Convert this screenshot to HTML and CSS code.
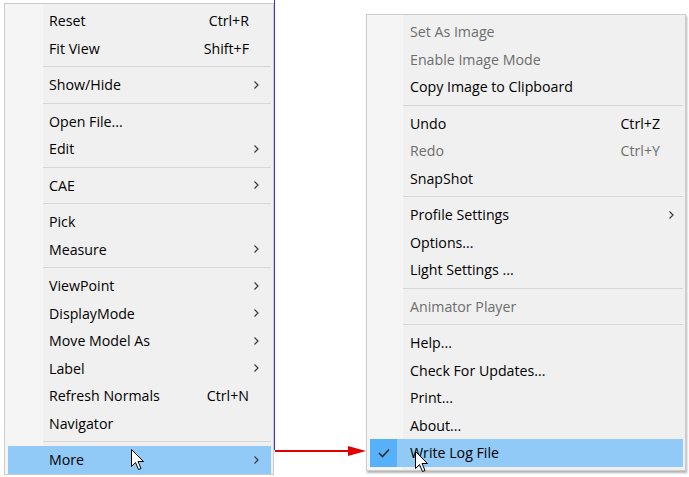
FILE: index.html
```html
<!DOCTYPE html>
<html>
<head>
<meta charset="utf-8">
<link rel="stylesheet" href="styles.css">
</head>
<body>
<div class="scene">
  <div class="menu menu-left">
    <div class="item"><span class="label">Reset</span><span class="key">Ctrl+R</span><span class="sub"></span></div>
    <div class="item"><span class="label">Fit View</span><span class="key">Shift+F</span><span class="sub"></span></div>
    <div class="sep"></div>
    <div class="item"><span class="label">Show/Hide</span><span class="sub"><svg width="5" height="8" viewBox="0 0 5 8"><polyline points="0.5,0.5 4,4 0.5,7.5" /></svg></span></div>
    <div class="sep"></div>
    <div class="item"><span class="label">Open File...</span><span class="sub"></span></div>
    <div class="item"><span class="label">Edit</span><span class="sub"><svg width="5" height="8" viewBox="0 0 5 8"><polyline points="0.5,0.5 4,4 0.5,7.5" /></svg></span></div>
    <div class="sep"></div>
    <div class="item"><span class="label">CAE</span><span class="sub"><svg width="5" height="8" viewBox="0 0 5 8"><polyline points="0.5,0.5 4,4 0.5,7.5" /></svg></span></div>
    <div class="sep"></div>
    <div class="item"><span class="label">Pick</span><span class="sub"></span></div>
    <div class="item"><span class="label">Measure</span><span class="sub"><svg width="5" height="8" viewBox="0 0 5 8"><polyline points="0.5,0.5 4,4 0.5,7.5" /></svg></span></div>
    <div class="sep"></div>
    <div class="item"><span class="label">ViewPoint</span><span class="sub"><svg width="5" height="8" viewBox="0 0 5 8"><polyline points="0.5,0.5 4,4 0.5,7.5" /></svg></span></div>
    <div class="item"><span class="label">DisplayMode</span><span class="sub"><svg width="5" height="8" viewBox="0 0 5 8"><polyline points="0.5,0.5 4,4 0.5,7.5" /></svg></span></div>
    <div class="item"><span class="label">Move Model As</span><span class="sub"><svg width="5" height="8" viewBox="0 0 5 8"><polyline points="0.5,0.5 4,4 0.5,7.5" /></svg></span></div>
    <div class="item"><span class="label">Label</span><span class="sub"><svg width="5" height="8" viewBox="0 0 5 8"><polyline points="0.5,0.5 4,4 0.5,7.5" /></svg></span></div>
    <div class="item"><span class="label">Refresh Normals</span><span class="key">Ctrl+N</span><span class="sub"></span></div>
    <div class="item"><span class="label">Navigator</span><span class="sub"></span></div>
    <div class="sep"></div>
    <div class="item hot"><span class="label">More</span><span class="sub"><svg width="5" height="8" viewBox="0 0 5 8"><polyline points="0.5,0.5 4,4 0.5,7.5" /></svg></span>
      <svg class="cursor cursor-left" width="14" height="22" viewBox="0 0 14 22"><path d="M0.5,0.5 L0.5,17.5 L4.5,13.5 L7.5,20.5 L10,19.5 L7,12.5 L12.5,12.5 Z"/></svg>
    </div>
  </div>

  <div class="connector">
    <svg class="arrow" width="92" height="12" viewBox="0 0 92 12"><line x1="0" y1="6" x2="76" y2="6"/><polygon points="73,1 91,6 73,11"/></svg>
  </div>

  <div class="menu menu-right">
    <div class="item off"><span class="label">Set As Image</span><span class="sub"></span></div>
    <div class="item off"><span class="label">Enable Image Mode</span><span class="sub"></span></div>
    <div class="item"><span class="label">Copy Image to Clipboard</span><span class="sub"></span></div>
    <div class="sep"></div>
    <div class="item"><span class="label">Undo</span><span class="key">Ctrl+Z</span><span class="sub"></span></div>
    <div class="item off"><span class="label">Redo</span><span class="key">Ctrl+Y</span><span class="sub"></span></div>
    <div class="item"><span class="label">SnapShot</span><span class="sub"></span></div>
    <div class="sep"></div>
    <div class="item"><span class="label">Profile Settings</span><span class="sub"><svg width="5" height="8" viewBox="0 0 5 8"><polyline points="0.5,0.5 4,4 0.5,7.5" /></svg></span></div>
    <div class="item"><span class="label">Options...</span><span class="sub"></span></div>
    <div class="item"><span class="label">Light Settings ...</span><span class="sub"></span></div>
    <div class="sep"></div>
    <div class="item off"><span class="label">Animator Player</span><span class="sub"></span></div>
    <div class="sep"></div>
    <div class="item"><span class="label">Help...</span><span class="sub"></span></div>
    <div class="item"><span class="label">Check For Updates...</span><span class="sub"></span></div>
    <div class="item"><span class="label">Print...</span><span class="sub"></span></div>
    <div class="item"><span class="label">About...</span><span class="sub"></span></div>
    <div class="item hot checked"><span class="check"><svg width="12" height="10" viewBox="0 0 12 10"><polyline points="1,5 4.5,8.5 11,1.5"/></svg></span><span class="label">Write Log File</span><span class="sub"></span>
      <svg class="cursor cursor-right" width="14" height="22" viewBox="0 0 14 22"><path d="M0.5,0.5 L0.5,17.5 L4.5,13.5 L7.5,20.5 L10,19.5 L7,12.5 L12.5,12.5 Z"/></svg>
    </div>
  </div>
</div>
</body>
</html>
```

FILE: styles.css
```css
html, body {
  margin: 0;
  padding: 0;
  background: #ffffff;
}
body {
  width: 689px;
  height: 477px;
  overflow: hidden;
  font-family: "Open Sans", "Noto Sans", sans-serif;
  font-size: 14.2px;
  color: #000;
}
.scene {
  display: flex;
  align-items: flex-start;
}
.menu {
  box-sizing: border-box;
  border: 1px solid #cccccc;
  background: linear-gradient(to right, #f5f5f5 0, #f5f5f5 var(--gut), #f0f0f0 var(--gut));
  padding-top: 3px;
}
.menu-left {
  --gut: 38px;
  margin-left: 4px;
  margin-top: 3px;
  width: 270px;
  height: 472px;
}
.menu-right {
  --gut: 36px;
  margin-top: 14px;
  width: 320px;
  height: 457px;
  box-shadow: 1px 2px 2px rgba(0,0,0,0.3);
}
.item {
  position: relative;
  display: flex;
  align-items: center;
  height: 27.5px;
  margin: 0 2px 0 3px;
  padding-left: 41px;
}
.menu-right .item {
  padding-left: 40px;
}
.label {
  flex: 1;
  white-space: nowrap;
  line-height: 1;
  padding-top: 1px;
}
.key {
  white-space: nowrap;
  line-height: 1;
  padding-top: 1px;
}
.sub {
  width: 22px;
  display: flex;
  justify-content: flex-end;
  padding-right: 12px;
  box-sizing: border-box;
}
.menu-right .sub {
  width: 23px;
  padding-right: 9px;
}
.sub svg polyline {
  fill: none;
  stroke: #3a3a3a;
  stroke-width: 1.2;
}
.off {
  color: #6d6d6d;
}
.sep {
  height: 9px;
  display: flex;
  align-items: center;
  margin-left: 38px;
  margin-right: 2px;
}
.menu-right .sep {
  margin-left: 36px;
}
.sep::before {
  content: "";
  flex: 1;
  height: 1px;
  background: #d7d7d7;
}
.hot {
  background: #91c9f7;
}
.check {
  position: absolute;
  left: 0;
  top: 0;
  width: 27px;
  height: 100%;
  background: #56b0fa;
  display: flex;
  align-items: center;
  justify-content: center;
}
.check polyline {
  fill: none;
  stroke: #2b2b2b;
  stroke-width: 1.6;
}
.connector {
  box-sizing: border-box;
  width: 92px;
  height: 450px;
  border-left: 1px solid #3535d8;
  display: flex;
  flex-direction: column;
  justify-content: flex-end;
}
.arrow {
  display: block;
  margin-bottom: -7px;
}
.arrow line {
  stroke: #e00000;
  stroke-width: 2;
}
.arrow polygon {
  fill: #e00000;
}
.cursor {
  position: absolute;
}
.cursor path {
  fill: #ffffff;
  stroke: #000000;
  stroke-width: 1;
  stroke-linejoin: miter;
}
.cursor-left {
  left: 123px;
  top: 3px;
}
.cursor-right {
  left: 45px;
  top: 12px;
}
```
